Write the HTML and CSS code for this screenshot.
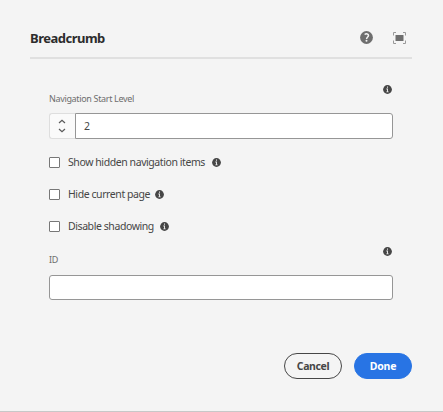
FILE: index.html
```html
<!DOCTYPE html>
<html lang="en">
<head>
<meta charset="utf-8">
<title>Breadcrumb</title>
<link rel="stylesheet" href="styles.css">
</head>
<body>
<svg width="0" height="0" class="defs" aria-hidden="true">
  <symbol id="info" viewBox="0 0 9 9">
    <circle cx="4.500" cy="4.500" r="4.400" fill="#464646"/>
    <path d="M4 1.500h1v1.200h-1zM3.300 3.600h1.700v2.800h.7v.8h-2.400v-.8h.7v-2h-.7z" fill="#e4e4e4"/>
  </symbol>
</svg>
<main class="dialog">
  <header class="header">
    <h1 class="title">Breadcrumb</h1>
    <div class="tools">
      <svg width="13" height="13" viewBox="0 0 13 13">
        <circle cx="6.5" cy="6.5" r="6.4" fill="#6e6e6e"/>
        <path d="M4.600 3.500C6.300 2.300 8.500 2.900 8.500 4.600C8.500 6 6.600 6 6.600 7.900" fill="none" stroke="#f4f4f4" stroke-width="1.5"/>
        <circle cx="6.5" cy="9.8" r="1" fill="#f4f4f4"/>
      </svg>
      <svg width="13" height="12" viewBox="0 0 13 12">
        <rect x="2.500" y="3" width="8" height="6" fill="#6e6e6e"/>
        <path d="M.5 3.500v-3h2.500M10 .5h2.500v3M12.500 8.500v3h-2.500M3 11.500h-2.500v-3" fill="none" stroke="#999"/>
      </svg>
    </div>
  </header>
  <form class="form">
    <div class="field">
      <div class="hint"><svg class="info"><use href="#info"/></svg></div>
      <label class="label">Navigation Start Level</label>
      <div class="number">
        <div class="stepper">
          <svg width="8" height="14" viewBox="0 0 8 14" fill="none" stroke="#5a5a5a" stroke-width="1.2"><path d="M1 4L4 1.200L7 4M1 10L4 12.800L7 10"/></svg>
        </div>
        <div class="input value">2</div>
      </div>
    </div>
    <div class="checks">
      <label class="check"><span class="box"></span><span class="text show">Show hidden navigation items</span><svg class="info"><use href="#info"/></svg></label>
      <label class="check"><span class="box"></span><span class="text hide">Hide current page</span><svg class="info"><use href="#info"/></svg></label>
      <label class="check"><span class="box"></span><span class="text disable">Disable shadowing</span><svg class="info"><use href="#info"/></svg></label>
    </div>
    <div class="field">
      <div class="hint"><svg class="info"><use href="#info"/></svg></div>
      <label class="label id-label">ID</label>
      <div class="input"></div>
    </div>
  </form>
  <footer class="footer">
    <button class="button cancel">Cancel</button>
    <button class="button done">Done</button>
  </footer>
</main>
</body>
</html>
```
FILE: styles.css
```css
* { box-sizing: border-box; }
body {
  margin: 0;
  background: #f4f4f4;
  color: #464646;
  font-family: "Noto Sans", "Open Sans", sans-serif;
  font-size: 10.5px;
}
svg { display: block; flex: none; }
.defs { position: absolute; }
.dialog {
  height: 412px;
  padding: 18px 31px 0 30px;
  border-bottom: 1px solid #c8c8c8;
}
.header {
  display: flex;
  justify-content: space-between;
  align-items: center;
  height: 41px;
  border-bottom: 2px solid #e0e0e0;
}
.title {
  margin: 0;
  font-size: 13px;
  line-height: 20px;
  font-weight: 700;
  letter-spacing: -0.5px;
  color: #2c2c2c;
}
.tools { display: flex; align-items: center; gap: 20px; padding-right: 6px; }
.form { padding: 26px 19px 0; }
.info { width: 9px; height: 9px; }
.hint { display: flex; justify-content: flex-end; height: 7px; padding-right: 1px; }
.label {
  display: block;
  height: 21px;
  line-height: 14px;
  font-size: 9px;
  letter-spacing: -0.34px;
  color: #6e6e6e;
}
.id-label { line-height: 12px; }
.number { display: flex; }
.stepper {
  display: flex;
  align-items: center;
  justify-content: center;
  width: 26px;
  height: 26px;
  padding-right: 1px;
  background: #fafafa;
  border: 1px solid #dedede;
  border-right: 0;
  border-radius: 3px 0 0 3px;
}
.input {
  flex: 1;
  height: 25px;
  background: #fff;
  border: 1px solid #969696;
  border-radius: 3px;
}
.value {
  height: 26px;
  padding-left: 8px;
  line-height: 24px;
  border-radius: 0 3px 3px 0;
}
.checks { padding: 7px 0 5px; }
.check { display: flex; align-items: center; height: 32px; }
.box {
  width: 11px;
  height: 11px;
  margin-right: 8px;
  background: #fff;
  border: 1px solid #777;
  border-radius: 1px;
}
.text { line-height: 16px; letter-spacing: -0.42px; white-space: nowrap; }
.show { width: 144px; }
.hide { width: 87px; }
.disable { width: 92px; }
.footer {
  display: flex;
  justify-content: flex-end;
  gap: 12px;
  margin-top: 53px;
}
.button {
  width: 58px;
  height: 26px;
  padding: 0;
  border: 1px solid #464646;
  border-radius: 13px;
  background: transparent;
  color: #464646;
  font-family: inherit;
  font-size: 10.5px;
  font-weight: 700;
  letter-spacing: -0.4px;
  line-height: 22px;
}
.done { background: #2874e4; border-color: #2874e4; color: #fff; letter-spacing: -0.25px; }
```
